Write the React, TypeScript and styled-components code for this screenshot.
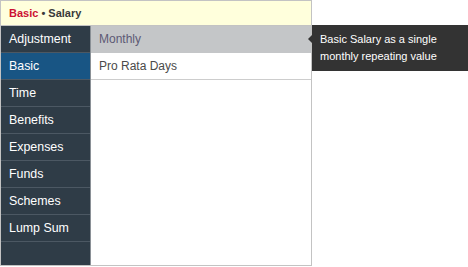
import React, { useState } from 'react'
import styled, { createGlobalStyle } from 'styled-components'

const GlobalStyle = createGlobalStyle`
  html, body {
    margin: 0;
    padding: 0;
    background: #ffffff;
    font-family: "Liberation Sans", Arial, sans-serif;
  }
`

const Page = styled.div`
  position: relative;
  width: 468px;
  height: 267px;
  overflow: hidden;
`

const Panel = styled.div`
  position: relative;
  width: 310px;
  height: 264px;
  border: 1px solid #c3c3c3;
  display: flex;
  flex-direction: column;
`

const Crumb = styled.div`
  height: 24px;
  border-bottom: 1px solid #c3c3c3;
  background: #ffffdc;
  display: flex;
  align-items: center;
  padding-left: 8px;
  font-size: 11px;
  font-weight: bold;
  color: #3a3a3a;
`

const CrumbRoot = styled.span`
  color: #cc1133;
`

const Body = styled.div`
  flex: 1;
  display: flex;
`

const Sidebar = styled.ul`
  list-style: none;
  margin: 0;
  padding: 0;
  width: 89px;
  background: #2f3c47;
  border-right: 1px solid #8a9096;
`

const SideItem = styled.li<{ $active?: boolean }>`
  height: 26px;
  border-bottom: 1px solid #4c5863;
  display: flex;
  align-items: center;
  padding-left: 8px;
  font-size: 12.4px;
  color: #ffffff;
  background: ${p => (p.$active ? '#185584' : 'transparent')};
  cursor: pointer;
`

const Options = styled.ul`
  list-style: none;
  margin: 0;
  padding: 0;
  flex: 1;
`

const Option = styled.li<{ $hover?: boolean }>`
  height: 26px;
  border-bottom: 1px solid ${p => (p.$hover ? '#c4c6c8' : '#cdcdcd')};
  display: flex;
  align-items: center;
  padding-left: 8px;
  font-size: 12px;
  color: ${p => (p.$hover ? '#5d5a75' : '#4a4a4a')};
  background: ${p => (p.$hover ? '#c4c6c8' : '#ffffff')};
  cursor: pointer;
`

const Tip = styled.div`
  position: absolute;
  left: 312px;
  top: 25px;
  width: 148px;
  padding: 6px 8px;
  background: #333333;
  color: #ffffff;
  font-size: 11px;
  line-height: 17px;

  &::before {
    content: '';
    position: absolute;
    left: -4px;
    top: 10px;
    border-top: 4px solid transparent;
    border-bottom: 4px solid transparent;
    border-right: 4px solid #333333;
  }
`

const sections = ['Adjustment', 'Basic', 'Time', 'Benefits', 'Expenses', 'Funds', 'Schemes', 'Lump Sum']
const options = [
  { label: 'Monthly', tip: 'Basic Salary as a single monthly repeating value' },
  { label: 'Pro Rata Days', tip: 'Basic Salary pro rata by days worked' },
]

export default function App() {
  const [section, setSection] = useState('Basic')
  const [hovered, setHovered] = useState(0)

  return (
    <Page>
      <GlobalStyle />
      <Panel>
        <Crumb>
          <CrumbRoot>{section}</CrumbRoot>&nbsp;&bull;&nbsp;Salary
        </Crumb>
        <Body>
          <Sidebar>
            {sections.map(s => (
              <SideItem key={s} $active={s === section} onClick={() => setSection(s)}>
                {s}
              </SideItem>
            ))}
          </Sidebar>
          <Options>
            {options.map((o, i) => (
              <Option key={o.label} $hover={i === hovered} onMouseEnter={() => setHovered(i)}>
                {o.label}
              </Option>
            ))}
          </Options>
        </Body>
      </Panel>
      <Tip>{options[hovered].tip}</Tip>
    </Page>
  )
}
